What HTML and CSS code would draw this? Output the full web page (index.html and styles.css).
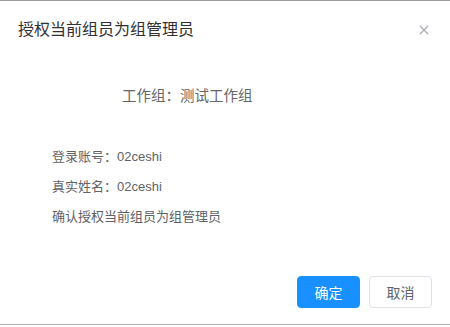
FILE: index.html
```html
<!DOCTYPE html>
<html lang="zh-CN">
<head>
    <meta charset="UTF-8">
    <meta name="viewport" content="width=device-width, initial-scale=1.0">
    <title>授权当前组员为组管理员</title>
    <link rel="stylesheet" href="styles.css">
</head>
<body>
    <div class="dialog">
        <div class="dialog-header">
            <span class="dialog-title">授权当前组员为组管理员</span>
            <button class="dialog-close" aria-label="关闭">
                <svg width="10" height="10" viewBox="0 0 10 10">
                    <path d="M1 1 L9 9 M9 1 L1 9" stroke="#a8abb2" stroke-width="1.2" fill="none"/>
                </svg>
            </button>
        </div>
        <div class="dialog-body">
            <p class="group-name">工作组：测试工作组</p>
            <div class="member-info">
                <p>登录账号：02ceshi</p>
                <p>真实姓名：02ceshi</p>
                <p>确认授权当前组员为组管理员</p>
            </div>
        </div>
        <div class="dialog-footer">
            <button class="btn btn-primary">确定</button>
            <button class="btn">取消</button>
        </div>
    </div>
</body>
</html>
```

FILE: styles.css
```css
body {
    margin: 0;
    font-family: "Liberation Sans", "Noto Sans CJK SC", sans-serif;
    background-color: #ffffff;
    color: #606266;
}
.dialog {
    height: 323px;
    border-top: 1px solid #9a9a9a;
    border-bottom: 1px solid #b0b0b0;
    display: flex;
    flex-direction: column;
}
.dialog-header {
    display: flex;
    justify-content: space-between;
    align-items: center;
    padding: 17px 16px 0 18px;
}
.dialog-title {
    font-size: 16px;
    line-height: 24px;
    color: #303133;
}
.dialog-close {
    border: none;
    background: none;
    padding: 0;
    width: 20px;
    height: 20px;
    display: flex;
    align-items: center;
    justify-content: center;
}
.dialog-body {
    flex: 1;
}
.group-name {
    margin: 43px 0 0 122px;
    font-size: 14.5px;
    line-height: 22px;
    color: #666666;
}
.member-info {
    margin: 35px 0 0 52px;
}
.member-info p {
    margin: 0;
    font-size: 13px;
    line-height: 30px;
}
.dialog-footer {
    display: flex;
    justify-content: flex-end;
    gap: 9px;
    padding: 0 18px 16px 0;
}
.btn {
    width: 63px;
    height: 32px;
    border: 1px solid #dcdfe6;
    border-radius: 4px;
    background-color: #ffffff;
    color: #606266;
    font-family: "Liberation Sans", "Noto Sans CJK SC", sans-serif;
    font-size: 14px;
}
.btn-primary {
    background-color: #1890ff;
    border-color: #1890ff;
    color: #ffffff;
}
```
